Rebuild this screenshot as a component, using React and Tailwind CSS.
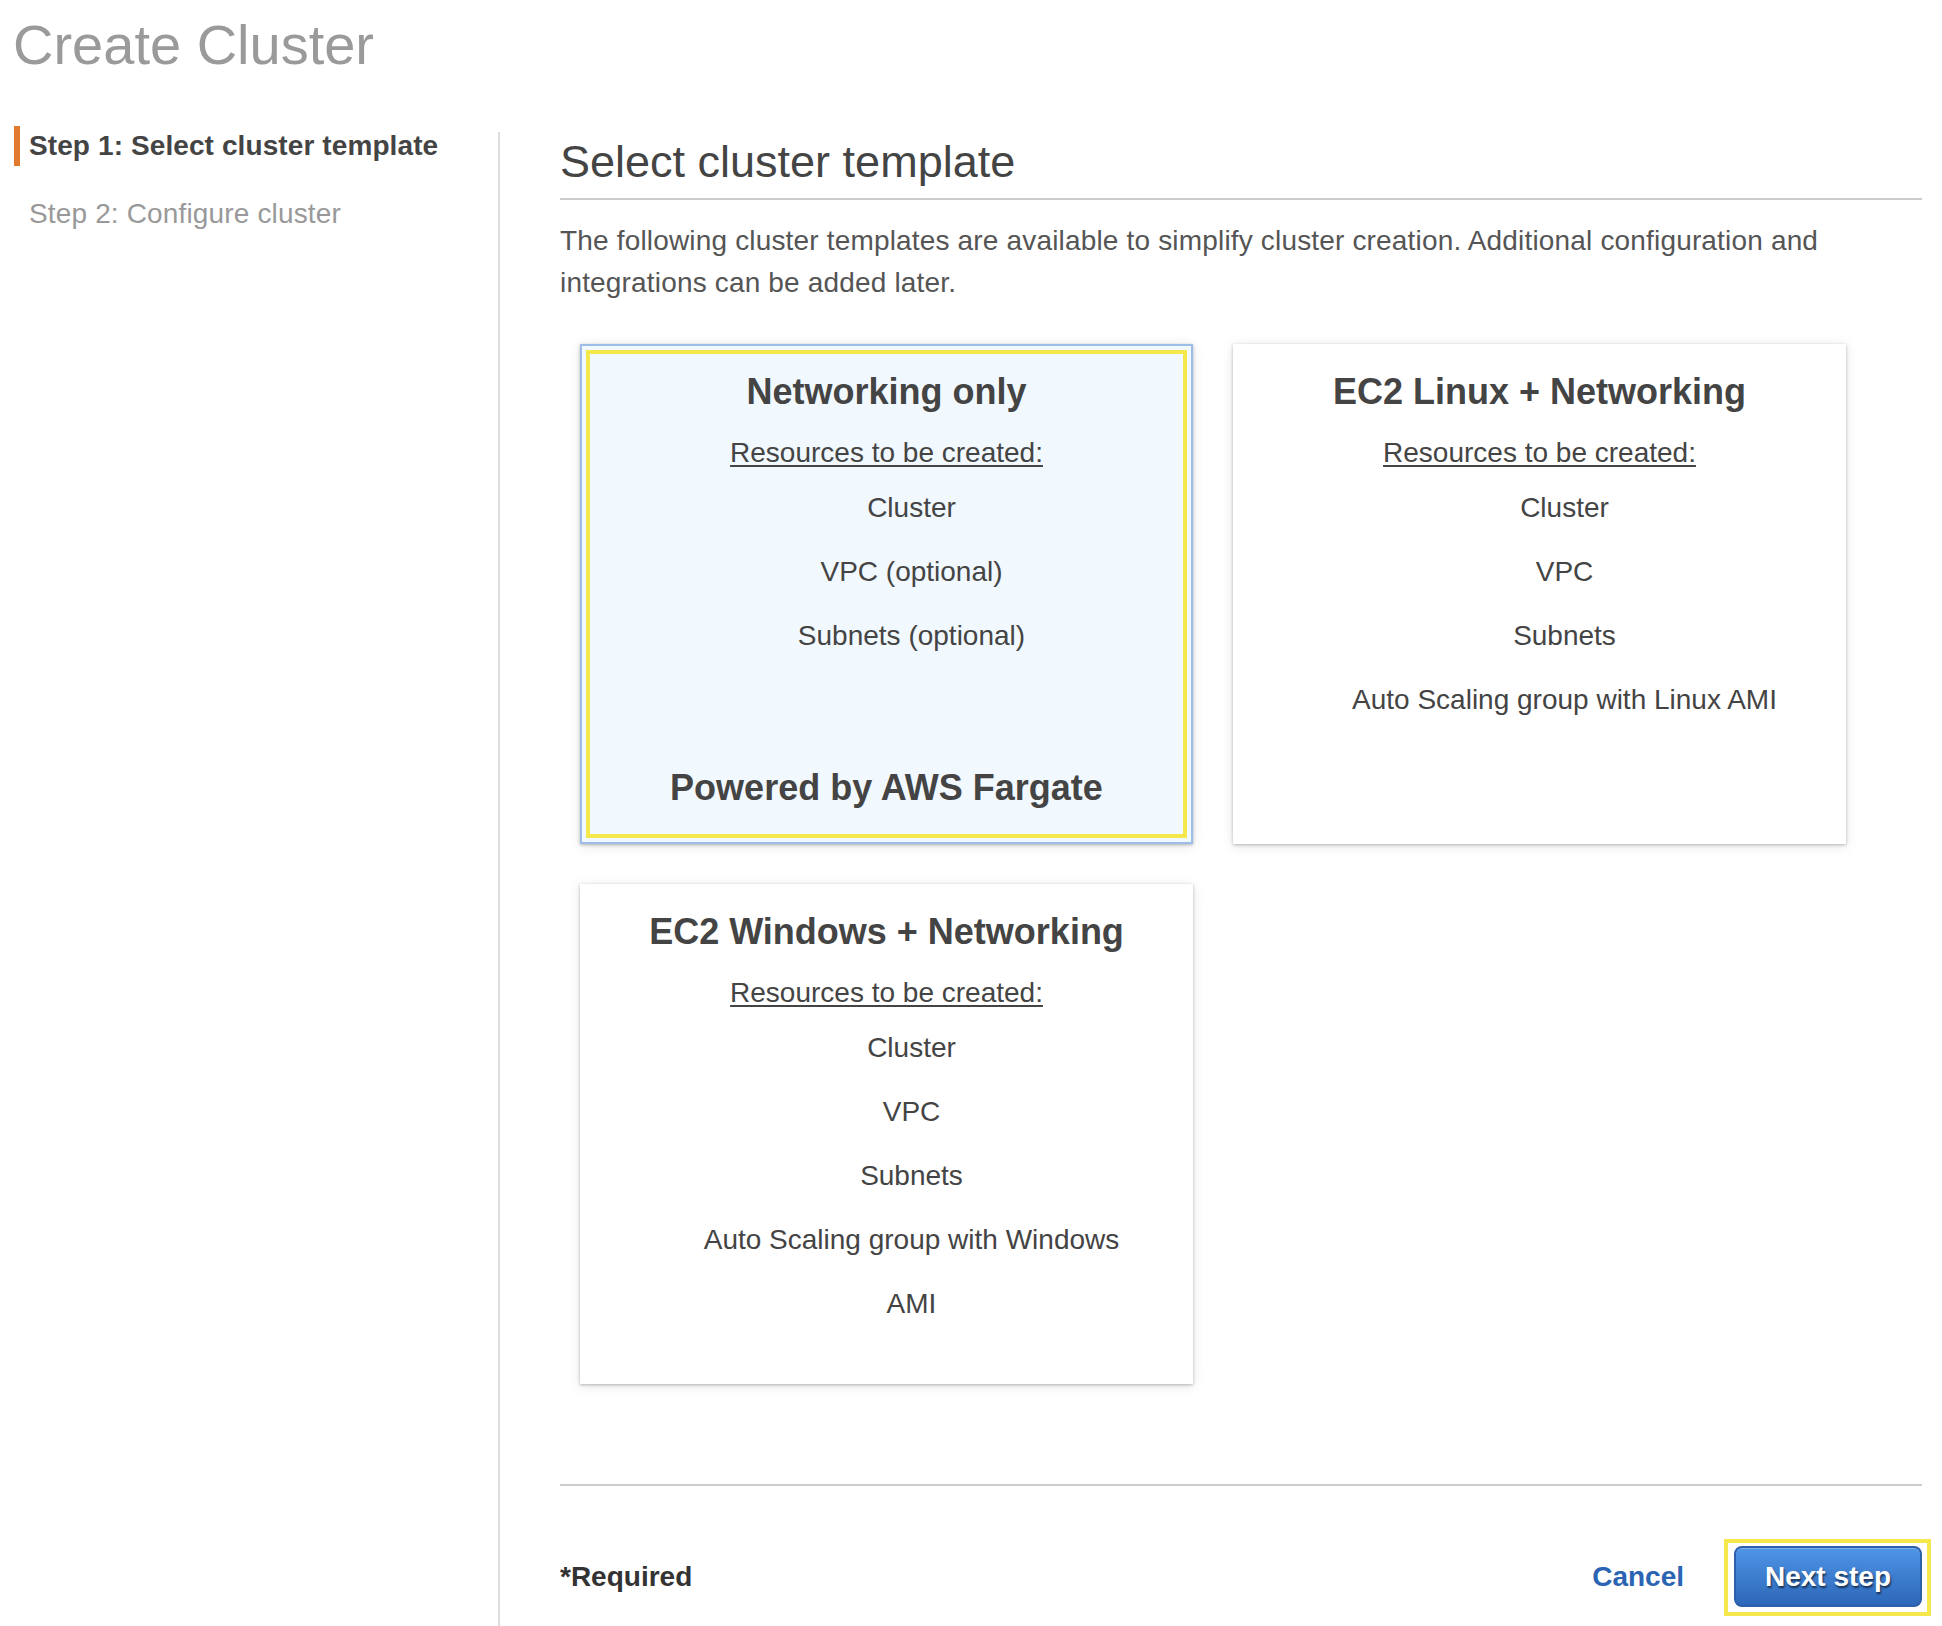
import React from "react";

function Card({ title, items, selected, footer }) {
  return (
    <div
      className={`relative m-[20px] flex h-[500px] w-[613px] shrink-0 flex-col items-center border-2 shadow-[0_1px_3px_rgba(0,0,0,0.25),0_2px_12px_rgba(0,0,0,0.10)] ${
        selected ? "border-[#9dbde6] bg-[#f1f8fe]" : "border-white bg-white"
      }`}
    >
      {selected && (
        <div className="pointer-events-none absolute inset-[4px] border-4 border-[#f4e84b]" />
      )}
      <div className="w-full pt-[26px] text-center text-[36px] font-bold leading-[40px] text-[#444]">
        {title}
      </div>
      <div className="mt-[20px] text-center text-[28px] leading-[42px] text-[#444] underline decoration-2 underline-offset-[3px]">
        Resources to be created:
      </div>
      <ul className="mt-[2px] w-full pl-[50px] text-center text-[28px] leading-[64px] text-[#444]">
        {items.map((it, i) => (
          <li key={i}>{it}</li>
        ))}
      </ul>
      {footer && (
        <div className="mt-auto mb-[34px] w-full text-center text-[36px] font-bold leading-[40px] text-[#444]">
          {footer}
        </div>
      )}
    </div>
  );
}

export default function App() {
  return (
    <div className="flex min-h-screen flex-col bg-white font-['Liberation_Sans',Arial,Helvetica,sans-serif]">
      <h1 className="pl-[13px] pt-[13px] text-[56px] font-normal leading-[64px] text-[#9a9a9a]">
        Create Cluster
      </h1>
      <div className="mt-[49px] flex flex-1">
        <nav className="w-[498px] shrink-0 pl-[14px]">
          <div className="h-[40px] border-l-[6px] border-[#e07b2e] pl-[9px] text-[28px] font-bold leading-[40px] tracking-[0.1px] text-[#444]">
            Step 1: Select cluster template
          </div>
          <div className="mt-[28px] h-[40px] pl-[15px] text-[28px] leading-[40px] tracking-[0.15px] text-[#999]">
            Step 2: Configure cluster
          </div>
        </nav>
        <div className="mt-[6px] w-[2px] shrink-0 bg-[#dddddd]" />
        <main className="min-w-0 flex-1 pl-[60px] pr-[20px]">
          <h2 className="border-b-2 border-[#cccccc] pb-[10px] pt-[10px] text-[45px] font-normal leading-[52px] text-[#444]">
            Select cluster template
          </h2>
          <p className="mt-[20px] text-[28px] leading-[42px] tracking-[0.17px] text-[#555]">
            The following cluster templates are available to simplify cluster creation. Additional configuration and
            integrations can be added later.
          </p>
          <div className="mt-[20px] flex flex-wrap">
            <Card
              selected
              title="Networking only"
              items={["Cluster", "VPC (optional)", "Subnets (optional)"]}
              footer="Powered by AWS Fargate"
            />
            <Card
              title="EC2 Linux + Networking"
              items={["Cluster", "VPC", "Subnets", "Auto Scaling group with Linux AMI"]}
            />
            <Card
              title="EC2 Windows + Networking"
              items={[
                "Cluster",
                "VPC",
                "Subnets",
                <>
                  Auto Scaling group with Windows
                  <br />
                  AMI
                </>,
              ]}
            />
          </div>
          <div className="mt-[80px] h-[2px] bg-[#cccccc]" />
          <div className="mt-[60px] flex h-[61px] items-center">
            <div className="text-[28px] font-bold text-[#333]">*Required</div>
            <div className="ml-auto text-[28px] font-bold text-[#2a64b3]">Cancel</div>
            <div className="relative ml-[50px]">
              <div className="pointer-events-none absolute bottom-[-9px] left-[-10px] right-[-9px] top-[-7px] border-4 border-[#f4e84b]" />
              <button className="flex h-[61px] w-[188px] items-center justify-center rounded-[8px] border-2 border-[#2b60aa] bg-linear-to-b from-[#4f95e6] to-[#2d67b9] text-[28px] font-bold text-white shadow-[inset_0_1px_0_rgba(255,255,255,0.25)] [text-shadow:1px_2px_2px_rgba(0,0,0,0.6)]">
                Next step
              </button>
            </div>
          </div>
        </main>
      </div>
    </div>
  );
}
